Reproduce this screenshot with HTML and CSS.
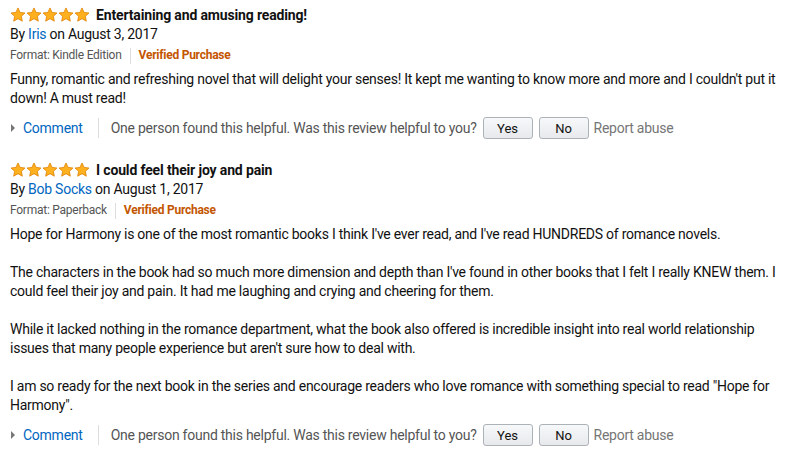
FILE: index.html
```html
<!DOCTYPE html>
<html lang="en">

<head>
  <meta charset="UTF-8">
  <title>Customer Reviews</title>
  <link rel="stylesheet" href="styles.css">
</head>

<body>
  <div class="reviews">
    <div class="review">
      <div class="review-title">
        <span class="stars">
          <svg class="star" viewBox="0 0 20 20"><path d="M10 1.2l2.6 5.6 6.1.7-4.5 4.2 1.2 6-5.4-3.1-5.4 3.1 1.2-6L1.3 7.5l6.1-.7z"/></svg>
          <svg class="star" viewBox="0 0 20 20"><path d="M10 1.2l2.6 5.6 6.1.7-4.5 4.2 1.2 6-5.4-3.1-5.4 3.1 1.2-6L1.3 7.5l6.1-.7z"/></svg>
          <svg class="star" viewBox="0 0 20 20"><path d="M10 1.2l2.6 5.6 6.1.7-4.5 4.2 1.2 6-5.4-3.1-5.4 3.1 1.2-6L1.3 7.5l6.1-.7z"/></svg>
          <svg class="star" viewBox="0 0 20 20"><path d="M10 1.2l2.6 5.6 6.1.7-4.5 4.2 1.2 6-5.4-3.1-5.4 3.1 1.2-6L1.3 7.5l6.1-.7z"/></svg>
          <svg class="star" viewBox="0 0 20 20"><path d="M10 1.2l2.6 5.6 6.1.7-4.5 4.2 1.2 6-5.4-3.1-5.4 3.1 1.2-6L1.3 7.5l6.1-.7z"/></svg>
        </span>
        <span class="title-text">Entertaining and amusing reading!</span>
      </div>
      <div class="byline">By <a href="#" class="author">Iris</a> on August 3, 2017</div>
      <div class="format">Format: Kindle Edition <span class="divider"></span> <span class="verified">Verified Purchase</span></div>
      <div class="review-body">
        Funny, romantic and refreshing novel that will delight your senses! It kept me wanting to know more and more and I couldn't put it down! A must read!
      </div>
      <div class="review-actions">
        <a href="#" class="comment-link"><span class="arrow"></span>Comment</a>
        <span class="divider tall"></span>
        <span class="helpful">One person found this helpful. Was this review helpful to you?</span>
        <button class="vote-button">Yes</button>
        <button class="vote-button">No</button>
        <a href="#" class="report">Report abuse</a>
      </div>
    </div>

    <div class="review">
      <div class="review-title">
        <span class="stars">
          <svg class="star" viewBox="0 0 20 20"><path d="M10 1.2l2.6 5.6 6.1.7-4.5 4.2 1.2 6-5.4-3.1-5.4 3.1 1.2-6L1.3 7.5l6.1-.7z"/></svg>
          <svg class="star" viewBox="0 0 20 20"><path d="M10 1.2l2.6 5.6 6.1.7-4.5 4.2 1.2 6-5.4-3.1-5.4 3.1 1.2-6L1.3 7.5l6.1-.7z"/></svg>
          <svg class="star" viewBox="0 0 20 20"><path d="M10 1.2l2.6 5.6 6.1.7-4.5 4.2 1.2 6-5.4-3.1-5.4 3.1 1.2-6L1.3 7.5l6.1-.7z"/></svg>
          <svg class="star" viewBox="0 0 20 20"><path d="M10 1.2l2.6 5.6 6.1.7-4.5 4.2 1.2 6-5.4-3.1-5.4 3.1 1.2-6L1.3 7.5l6.1-.7z"/></svg>
          <svg class="star" viewBox="0 0 20 20"><path d="M10 1.2l2.6 5.6 6.1.7-4.5 4.2 1.2 6-5.4-3.1-5.4 3.1 1.2-6L1.3 7.5l6.1-.7z"/></svg>
        </span>
        <span class="title-text">I could feel their joy and pain</span>
      </div>
      <div class="byline">By <a href="#" class="author">Bob Socks</a> on August 1, 2017</div>
      <div class="format">Format: Paperback <span class="divider"></span> <span class="verified">Verified Purchase</span></div>
      <div class="review-body">
        <p>Hope for Harmony is one of the most romantic books I think I've ever read, and I've read HUNDREDS of romance novels.</p>
        <p>The characters in the book had so much more dimension and depth than I've found in other books that I felt I really KNEW them. I could feel their joy and pain. It had me laughing and crying and cheering for them.</p>
        <p>While it lacked nothing in the romance department, what the book also offered is incredible insight into real world relationship issues that many people experience but aren't sure how to deal with.</p>
        <p>I am so ready for the next book in the series and encourage readers who love romance with something special to read "Hope for Harmony".</p>
      </div>
      <div class="review-actions">
        <a href="#" class="comment-link"><span class="arrow"></span>Comment</a>
        <span class="divider tall"></span>
        <span class="helpful">One person found this helpful. Was this review helpful to you?</span>
        <button class="vote-button">Yes</button>
        <button class="vote-button">No</button>
        <a href="#" class="report">Report abuse</a>
      </div>
    </div>
  </div>
</body>

</html>
```

FILE: styles.css
```css
body {
  margin: 0;
  font-family: Roboto, "Liberation Sans", Arial, sans-serif;
  font-size: 14px;
  line-height: 19px;
  letter-spacing: -0.25px;
  color: #111;
  background-color: #fff;
}

a {
  color: #0066c0;
  text-decoration: none;
}

.reviews {
  width: 785px;
  padding: 5px 10px 0 10px;
}

.review {
  margin-bottom: 20px;
}

.review-title {
  display: flex;
  align-items: center;
  height: 20px;
}

.stars {
  display: flex;
  margin-right: 6px;
}

.star {
  width: 16px;
  height: 16px;
  fill: #ffb01f;
  stroke: #de7f00;
  stroke-width: 1;
  stroke-linejoin: round;
}

.title-text {
  font-weight: bold;
  letter-spacing: -0.15px;
}

.byline {
  color: #111;
}

.format {
  display: flex;
  align-items: center;
  font-size: 12px;
  color: #555;
  height: 23px;
}

.divider {
  display: inline-block;
  width: 1px;
  height: 16px;
  background-color: #ddd;
  margin: 0 8px;
}

.divider.tall {
  height: 20px;
  margin: 0 12px 0 15px;
}

.verified {
  color: #c45500;
  font-weight: bold;
}

.review-body {
  margin-top: 3px;
}

.review-body p {
  margin: 0 0 19px 0;
}

.review-body p:last-child {
  margin-bottom: 0;
}

.review-actions {
  display: flex;
  align-items: center;
  margin-top: 8px;
  height: 24px;
  color: #555;
}

.comment-link {
  display: flex;
  align-items: center;
}

.arrow {
  width: 0;
  height: 0;
  border-top: 4px solid transparent;
  border-bottom: 4px solid transparent;
  border-left: 4px solid #777;
  margin: 0 8px 0 1px;
}

.vote-button {
  font-family: inherit;
  font-size: 13px;
  color: #111;
  width: 50px;
  height: 22px;
  margin-left: 6px;
  padding: 0;
  border: 1px solid #adb1b8;
  border-radius: 3px;
  background: linear-gradient(#f7f8fa, #e7e9ec);
  cursor: pointer;
}

.report {
  color: #767676;
  margin-left: 5px;
}
```
